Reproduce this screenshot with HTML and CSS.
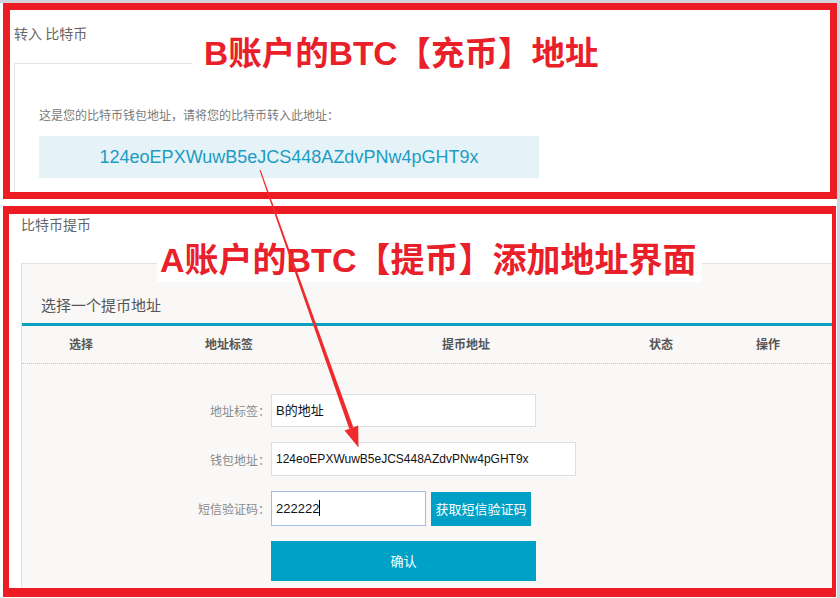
FILE: index.html
```html
<!DOCTYPE html>
<html lang="zh-CN">
<head>
<meta charset="utf-8">
<title>BTC 充币 / 提币</title>
<link rel="stylesheet" href="styles.css">
</head>
<body>
<div class="page">
  <section class="box box-in">
    <div class="sec-title">转入 比特币</div>
    <div class="panel-in">
      <p class="hint">这是您的比特币钱包地址，请将您的比特币转入此地址：</p>
      <div class="addr">124eoEPXWuwB5eJCS448AZdvPNw4pGHT9x</div>
    </div>
  </section>

  <section class="box box-out">
    <div class="sec-title sec-title-out">比特币提币</div>
    <div class="panel-out">
      <div class="panel-head">选择一个提币地址</div>
      <div class="thead">
        <span>选择</span>
        <span>地址标签</span>
        <span>提币地址</span>
        <span>状态</span>
        <span>操作</span>
      </div>
      <div class="form">
        <div class="row">
          <div class="label">地址标签：</div>
          <div class="field f-tag">B的地址</div>
        </div>
        <div class="row">
          <div class="label">钱包地址：</div>
          <div class="field f-addr">124eoEPXWuwB5eJCS448AZdvPNw4pGHT9x</div>
        </div>
        <div class="row">
          <div class="label">短信验证码：</div>
          <div class="field f-code">222222<span class="caret"></span></div>
          <div class="sms-btn">获取短信验证码</div>
        </div>
        <div class="row">
          <div class="confirm-btn">确认</div>
        </div>
      </div>
    </div>
  </section>

  <div class="note note-b">B账户的BTC【充币】地址</div>
  <div class="note note-a">A账户的BTC【提币】添加地址界面</div>

  <svg class="arrow" width="840" height="598" viewBox="0 0 840 598">
    <polygon points="259.5,170.2 260.5,169.8 353.4,427.4 349.2,428.8" fill="#ee2a2d"/>
    <polygon points="344.6,430.6 358.2,425.6 358.5,447.5" fill="#ee2a2d"/>
  </svg>
</div>
</body>
</html>
```

FILE: styles.css
```css
* {
  box-sizing: border-box;
}

html, body {
  margin: 0;
  padding: 0;
}

body {
  background: #cbd5e4;
  font-family: "Noto Sans CJK SC", sans-serif;
  color: #555;
}

.page {
  position: relative;
  width: 837px;
  height: 598px;
  background: #fff;
  border-top: 3px solid #d2d6dc;
  display: flex;
  flex-direction: column;
  overflow: hidden;
}

.box {
  border: 7px solid #ed1c24;
  display: flex;
  flex-direction: column;
}

.box-in {
  margin-left: 3px;
  height: 196px;
}

.box-out {
  margin: 7px 1px 0 3px;
  height: 391px;
  border-width: 8px 4px 9px 6px;
}

.sec-title {
  font-size: 14px;
  line-height: 20px;
  color: #666;
  padding: 13px 0 0 4px;
}

.sec-title-out {
  padding: 0 0 0 12px;
}

.panel-in {
  margin: 20px 0 0 4px;
  width: 594px;
  flex: 1;
  border-top: 1px solid #e4e4e4;
  border-left: 1px solid #e4e4e4;
  padding: 42px 0 0 24px;
}

.hint {
  margin: 0;
  font-size: 12px;
  line-height: 18px;
  color: #7a7a7a;
}

.addr {
  margin-top: 12px;
  width: 500px;
  height: 42px;
  background: #e5f3f9;
  color: #1c9cc2;
  font-family: "Liberation Sans", Arial, sans-serif;
  font-size: 18px;
  line-height: 42px;
  text-align: center;
}

.panel-out {
  margin: 29px 0 0 12px;
  flex: 1;
  background: #f9f8f6;
  border-top: 1px solid #e2e2e2;
  border-left: 1px solid #e2e2e2;
  display: flex;
  flex-direction: column;
}

.panel-head {
  padding: 31px 0 8px 19px;
  font-size: 15px;
  line-height: 20px;
  color: #555;
  border-bottom: 3px solid #0b9fc2;
}

.thead {
  display: grid;
  grid-template-columns: 118px 178px 296px 94px 120px;
  height: 38px;
  border-bottom: 1px dotted #c6c6c6;
  font-size: 12px;
  font-weight: bold;
  line-height: 36px;
  color: #555;
  text-align: center;
}

.form {
  padding-top: 30px;
  display: flex;
  flex-direction: column;
  gap: 15px;
}

.row {
  display: flex;
  align-items: center;
}

.label {
  width: 249px;
  padding-right: 1px;
  text-align: right;
  font-size: 12px;
  color: #8a8a8a;
}

.field {
  height: 34px;
  background: #fff;
  border: 1px solid #dedede;
  padding-left: 4px;
  font-family: "Liberation Sans", Arial, "Noto Sans CJK SC", sans-serif;
  font-size: 13px;
  line-height: 32px;
  color: #111;
}

.f-tag {
  width: 265px;
  height: 33px;
  line-height: 31px;
}

.f-addr {
  width: 305px;
  font-size: 12px;
}

.f-code {
  width: 155px;
  height: 35px;
  line-height: 33px;
  border-color: #a3b9e8;
}

.caret {
  display: inline-block;
  width: 1px;
  height: 16px;
  background: #000;
  vertical-align: -3px;
}

.sms-btn {
  margin-left: 5px;
  width: 100px;
  height: 34px;
  background: #00a0c6;
  color: #fff;
  font-size: 13px;
  line-height: 34px;
  text-align: center;
}

.confirm-btn {
  margin-left: 249px;
  width: 265px;
  height: 40px;
  background: #00a1c7;
  color: #fff;
  font-size: 13px;
  line-height: 40px;
  text-align: center;
}

.note {
  position: absolute;
  background: #fff;
  color: #e9202a;
  font-family: "Liberation Sans", Arial, "Noto Sans CJK SC", sans-serif;
  font-weight: bold;
  white-space: nowrap;
}

.note-b {
  left: 192px;
  top: 28px;
  padding: 0 10px 0 12px;
  font-size: 33.5px;
  line-height: 46px;
}

.note-a {
  left: 157px;
  top: 235px;
  padding: 0 6px 0 3px;
  font-size: 34px;
  line-height: 44px;
}

.arrow {
  position: absolute;
  top: -3px;
  left: 0;
  pointer-events: none;
}
```
